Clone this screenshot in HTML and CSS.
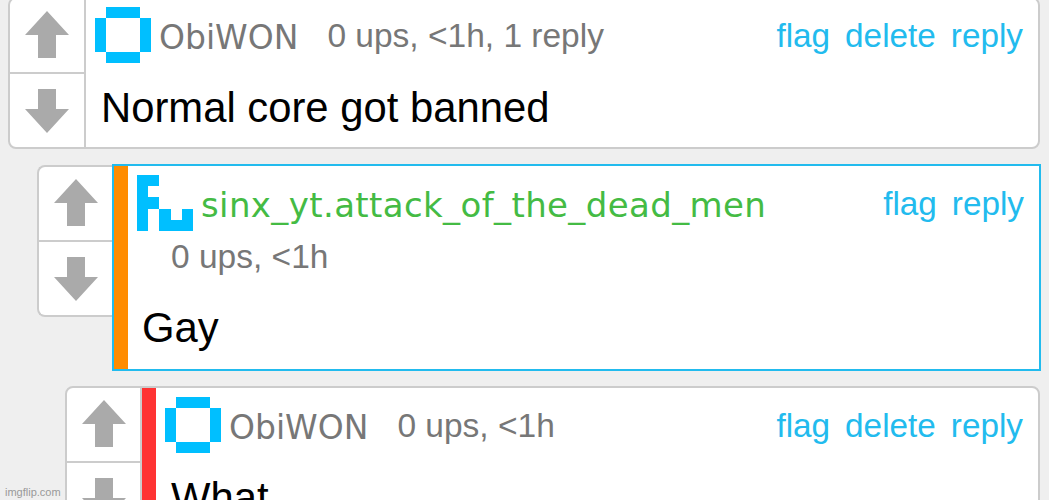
FILE: index.html
```html
<!DOCTYPE html>
<html lang="en">
<head>
    <meta charset="UTF-8">
    <meta name="viewport" content="width=device-width, initial-scale=1.0">
    <title>Comments</title>
    <link rel="stylesheet" href="styles.css">
</head>
<body>
    <div class="thread">
        <div class="comment">
            <div class="votes">
                <div class="vote"><svg class="arrow up" viewBox="0 0 44 47"><path d="M22 0L44 24H31V47H13V24H0Z"/></svg></div>
                <div class="vote"><svg class="arrow" viewBox="0 0 44 44"><path d="M22 44L44 20H31V0H13V20H0Z"/></svg></div>
            </div>
            <div class="content">
                <div class="body">
                    <div class="head">
                        <svg class="avatar" viewBox="0 0 5 5"><path d="M1 0H4V1H1ZM0 1H1V4H0ZM4 1H5V4H4ZM1 4H4V5H1Z"/></svg>
                        <span class="name">ObiWON</span>
                        <span class="meta">0 ups, &lt;1h, 1 reply</span>
                        <div class="links"><a>flag</a><a>delete</a><a>reply</a></div>
                    </div>
                    <p class="text">Normal core got banned</p>
                </div>
            </div>
        </div>

        <div class="comment reply highlighted">
            <div class="votes">
                <div class="vote"><svg class="arrow up" viewBox="0 0 44 47"><path d="M22 0L44 24H31V47H13V24H0Z"/></svg></div>
                <div class="vote"><svg class="arrow" viewBox="0 0 44 44"><path d="M22 44L44 20H31V0H13V20H0Z"/></svg></div>
            </div>
            <div class="content">
                <div class="bar bar-orange"></div>
                <div class="body">
                    <div class="head">
                        <svg class="avatar" viewBox="0 0 5 5"><path d="M0 0H2V1H1V2H2V3H1V5H0ZM2 3H3V4H4V3H5V5H2Z"/></svg>
                        <span class="name green">sinx_yt.attack_of_the_dead_men</span>
                        <div class="links"><a>flag</a><a>reply</a></div>
                    </div>
                    <div class="meta below">0 ups, &lt;1h</div>
                    <p class="text after-meta">Gay</p>
                </div>
            </div>
        </div>

        <div class="comment reply reply-2">
            <div class="votes">
                <div class="vote"><svg class="arrow up" viewBox="0 0 44 47"><path d="M22 0L44 24H31V47H13V24H0Z"/></svg></div>
                <div class="vote"><svg class="arrow" viewBox="0 0 44 44"><path d="M22 44L44 20H31V0H13V20H0Z"/></svg></div>
            </div>
            <div class="content">
                <div class="bar bar-red"></div>
                <div class="body">
                    <div class="head">
                        <svg class="avatar" viewBox="0 0 5 5"><path d="M1 0H4V1H1ZM0 1H1V4H0ZM4 1H5V4H4ZM1 4H4V5H1Z"/></svg>
                        <span class="name">ObiWON</span>
                        <span class="meta">0 ups, &lt;1h</span>
                        <div class="links"><a>flag</a><a>delete</a><a>reply</a></div>
                    </div>
                    <p class="text">What</p>
                </div>
            </div>
        </div>
    </div>
    <div class="watermark">imgflip.com</div>
</body>
</html>
```

FILE: styles.css
```css
html, body {
    height: 100%;
}
body {
    margin: 0;
    overflow: hidden;
    background-color: #efefef;
    font-family: "Liberation Sans", Arial, sans-serif;
}
.thread {
    display: flex;
    flex-direction: column;
    gap: 15px;
    margin: -3px 9px 0 8px;
}
.comment {
    display: flex;
    background-color: white;
    border: 2px solid #ccc;
    border-radius: 8px;
}
.reply .head {
    padding-top: 9px;
}
.highlighted {
    align-items: flex-start;
    margin: 0 -1px 0 29px;
    border: none;
    background-color: transparent;
}
.reply-2 {
    margin-left: 57px;
}
.votes {
    flex: none;
    width: 74px;
    border-right: 2px solid #ccc;
}
.reply-2 .votes {
    width: 73px;
}
.highlighted .votes {
    width: 73px;
    margin-top: 1px;
    border: 2px solid #ccc;
    border-right: none;
    border-radius: 8px 0 0 8px;
    background-color: white;
}
.vote {
    display: flex;
    justify-content: center;
    align-items: center;
    height: 73px;
}
.vote + .vote {
    border-top: 2px solid #ccc;
}
.arrow {
    width: 44px;
    height: 44px;
    fill: #aaa;
}
.up {
    height: 47px;
    margin-top: -3px;
}
.content {
    display: flex;
    flex: 1;
    min-width: 0;
    border-radius: 0 8px 8px 0;
}
.highlighted .content {
    height: 203px;
    border: 2px solid #22bbee;
    background-color: white;
    border-radius: 0;
}
.bar {
    flex: none;
    width: 14px;
}
.bar-orange {
    background-color: #ff8c00;
}
.bar-red {
    background-color: #ff3333;
}
.body {
    flex: 1;
    min-width: 0;
}
.head {
    display: flex;
    align-items: center;
    height: 56px;
    padding: 8px 15px 0 9px;
}
.avatar {
    flex: none;
    width: 56px;
    height: 56px;
    margin-right: 8px;
    fill: #00bfff;
    shape-rendering: crispEdges;
}
.name {
    font-family: "DejaVu Sans", Verdana, sans-serif;
    font-size: 33px;
    color: #777;
    margin-top: 4px;
}
.green {
    font-size: 34px;
    letter-spacing: 0.38px;
    color: #44bb44;
}
.meta {
    margin-left: 29px;
    margin-top: 2px;
    font-size: 33.5px;
    color: #777;
}
.below {
    margin-left: 43px;
    margin-top: 7px;
}
.links {
    display: flex;
    gap: 15px;
    margin-left: auto;
    margin-top: 2px;
    font-size: 33.3px;
    color: #22bbee;
}
.text {
    margin: 21px 0 0 15px;
    font-size: 41.8px;
    color: black;
}
.after-meta {
    margin: 28px 0 0 14px;
}
.watermark {
    position: absolute;
    left: 5px;
    bottom: 2px;
    font-size: 11px;
    color: #999;
}
```
